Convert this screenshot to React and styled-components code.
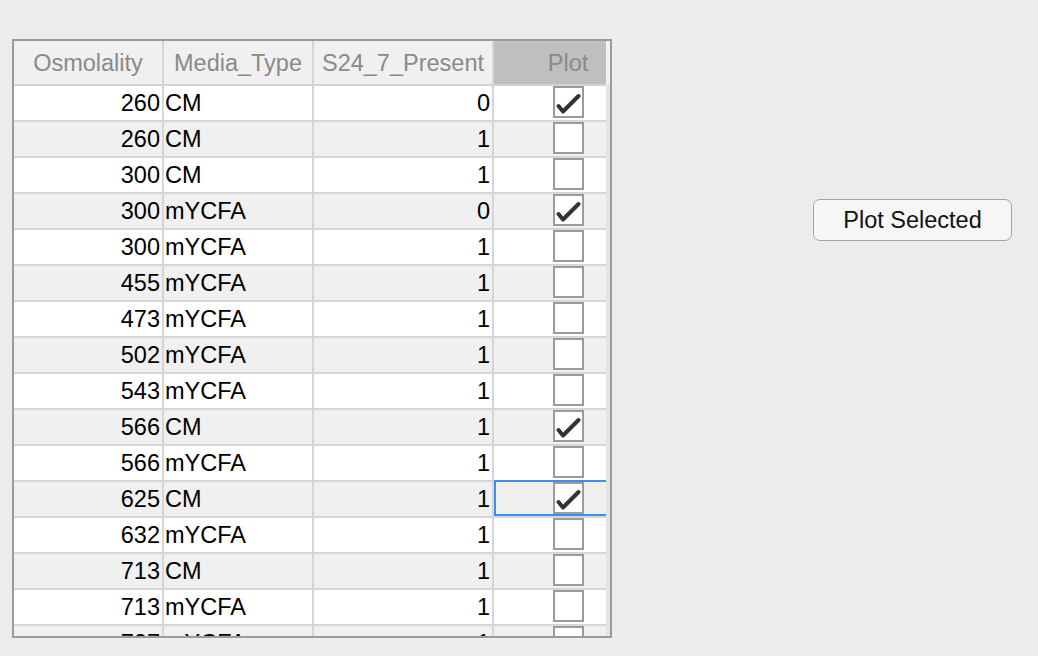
import React from 'react'
import styled, { createGlobalStyle } from 'styled-components'

const rows = [
    { osm: 260, media: 'CM', present: 0, plot: true },
    { osm: 260, media: 'CM', present: 1, plot: false },
    { osm: 300, media: 'CM', present: 1, plot: false },
    { osm: 300, media: 'mYCFA', present: 0, plot: true },
    { osm: 300, media: 'mYCFA', present: 1, plot: false },
    { osm: 455, media: 'mYCFA', present: 1, plot: false },
    { osm: 473, media: 'mYCFA', present: 1, plot: false },
    { osm: 502, media: 'mYCFA', present: 1, plot: false },
    { osm: 543, media: 'mYCFA', present: 1, plot: false },
    { osm: 566, media: 'CM', present: 1, plot: true },
    { osm: 566, media: 'mYCFA', present: 1, plot: false },
    { osm: 625, media: 'CM', present: 1, plot: true, selected: true },
    { osm: 632, media: 'mYCFA', present: 1, plot: false },
    { osm: 713, media: 'CM', present: 1, plot: false },
    { osm: 713, media: 'mYCFA', present: 1, plot: false },
    { osm: 727, media: 'mYCFA', present: 1, plot: false },
];

function Check() {
    return (
        <svg width="26" height="22" viewBox="0 0 26 22">
            <path d="M3.5 14 L8 19.5 L23.5 4" fill="none" stroke="#333" strokeWidth="4" strokeLinecap="round" strokeLinejoin="round" />
        </svg>
    )
}

function App() {
    return (
        <>
            <GlobalStyle />
            <Page>
                <Frame>
                    <Viewport>
                        <Grid>
                            <HeadCell>Osmolality</HeadCell>
                            <HeadCell>Media_Type</HeadCell>
                            <HeadCell>S24_7_Present</HeadCell>
                            <HeadCell active>Plot</HeadCell>
                            {rows.map((r, i) => (
                                <React.Fragment key={i}>
                                    <Cell odd={i % 2 === 1} align="right">{r.osm}</Cell>
                                    <Cell odd={i % 2 === 1}>{r.media}</Cell>
                                    <Cell odd={i % 2 === 1} align="right">{r.present}</Cell>
                                    <BoxCell odd={i % 2 === 1} selected={r.selected}>
                                        <Box>{r.plot && <Check />}</Box>
                                    </BoxCell>
                                </React.Fragment>
                            ))}
                        </Grid>
                    </Viewport>
                    <Track>
                        <TrackHead />
                        <TrackBody />
                    </Track>
                </Frame>
                <Button>Plot Selected</Button>
            </Page>
        </>
    )
}

export default App;

const GlobalStyle = createGlobalStyle`
    html, body {
        margin:0;
        padding:0;
        background:#ececec;
        font-family:"Liberation Sans", Arial, sans-serif;
    }
`;

const Page = styled.div`
    display:flex;
    align-items:flex-start;
    padding:39px 0 0 12px;
    width:1038px;
    height:656px;
    box-sizing:border-box;
`;

const Frame = styled.div`
    display:flex;
    width:600px;
    height:599px;
    border:2px solid #9b9b9b;
    box-sizing:border-box;
    background:#ececec;
`;

const Viewport = styled.div`
    flex:1;
    overflow:hidden;
`;

const Grid = styled.div`
    display:grid;
    grid-template-columns:150px 150px 180px 148px;
    grid-template-rows:45px;
    grid-auto-rows:36px;
    width:628px;
    font-size:23.5px;
`;

const HeadCell = styled.div`
    display:flex;
    align-items:center;
    justify-content:center;
    box-sizing:border-box;
    border-bottom:2px solid #d3d3d3;
    border-right:${p => p.active ? 'none' : '2px solid #d6d6d6'};
    background:${p => p.active ? '#bfbfbf' : '#f0f0f0'};
    color:#8a8a8a;
    padding:1px 0 0 0;
`;

const Cell = styled.div`
    display:flex;
    align-items:center;
    justify-content:${p => p.align === 'right' ? 'flex-end' : 'flex-start'};
    padding:0 2px 0 1px;
    box-sizing:border-box;
    border-bottom:2px solid #d6d6d6;
    border-right:2px solid #d6d6d6;
    background:${p => p.odd ? '#f0f0f0' : '#ffffff'};
    color:#000;
    white-space:nowrap;
`;

const BoxCell = styled.div`
    position:relative;
    display:flex;
    justify-content:center;
    align-items:flex-start;
    box-sizing:border-box;
    border-bottom:2px solid #d6d6d6;
    background:${p => p.odd ? '#f0f0f0' : '#ffffff'};

    &::after {
        content:'';
        display:${p => p.selected ? 'block' : 'none'};
        position:absolute;
        top:-2px;
        left:0;
        right:0;
        bottom:0;
        border:2px solid #3d8ef0;
    }
`;

const Box = styled.div`
    width:31px;
    height:32px;
    box-sizing:border-box;
    border:2px solid #9b9b9b;
    background:#fff;
    display:flex;
    align-items:center;
    justify-content:center;
    padding-top:2px;
`;

const Track = styled.div`
    display:flex;
    flex-direction:column;
    width:4px;
`;

const TrackHead = styled.div`
    height:43px;
    background:#f2f2f2;
`;

const TrackBody = styled.div`
    flex:1;
    background:#e4e4e4;
`;

const Button = styled.button`
    margin:160px 0 0 201px;
    width:199px;
    height:42px;
    border:1.5px solid #a3a3a3;
    border-radius:7px;
    background:#f6f6f6;
    font-family:"Liberation Sans", Arial, sans-serif;
    font-size:23.5px;
    color:#111;
    padding:0;
`;
